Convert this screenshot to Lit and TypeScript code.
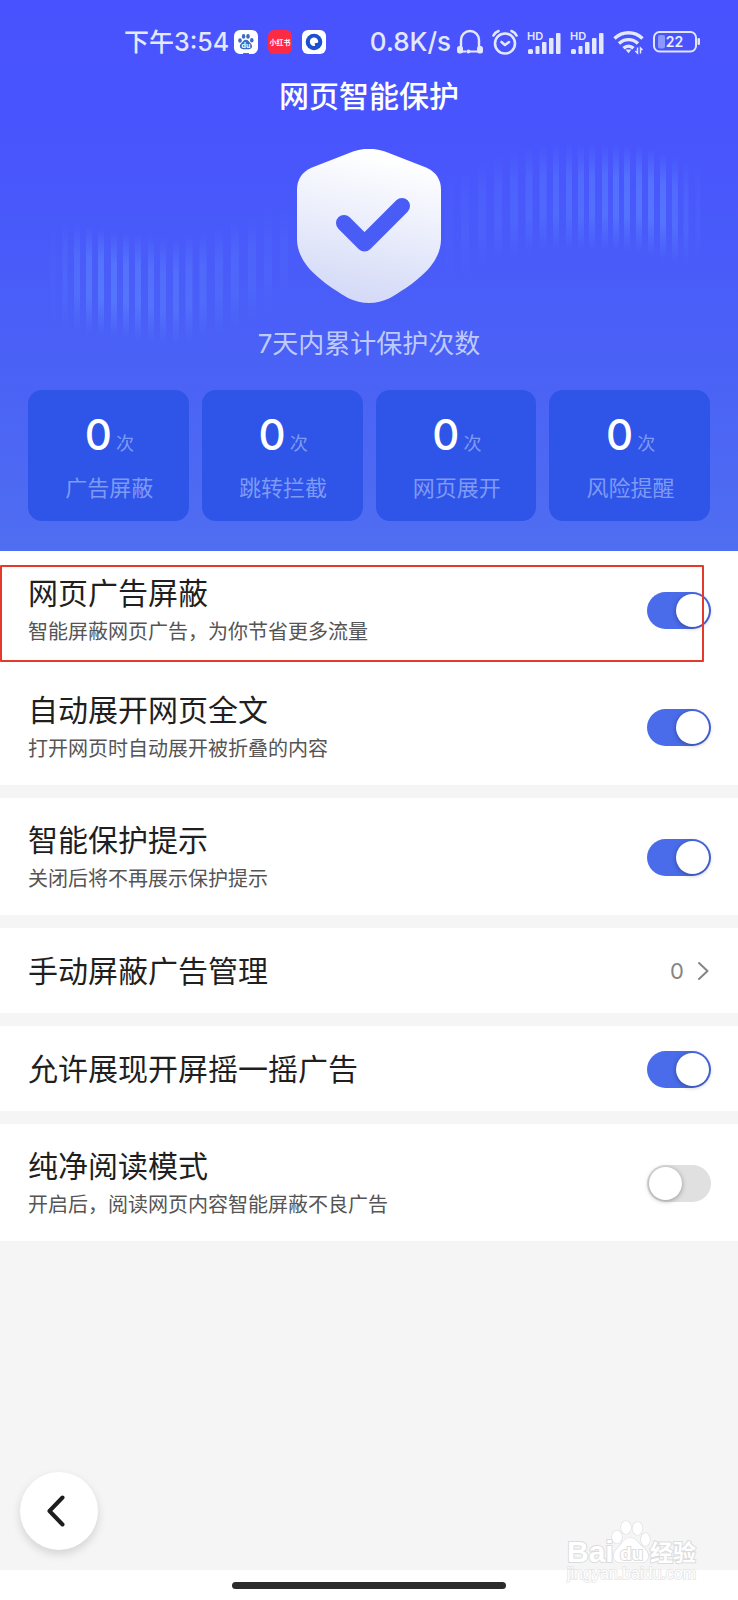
import { LitElement, html, svg, css } from "lit";
import { customElement, property, state } from "lit/decorators.js";

const FONT = css`Inter, "Noto Sans CJK SC", sans-serif`;

type Bar = [x: number, top: number, width: number, alpha: number];

/** Light bars to the left of the shield. */
const LEFT_BARS: Bar[] = [
  [53, 220, 5, 0.1], [65, 222, 5, 0.32], [77, 224, 6, 0.6], [89, 226, 6, 0.85],
  [101, 228, 6, 0.95], [114, 231, 6, 0.85], [126, 232, 6, 0.85], [138, 234, 6, 0.85],
  [151, 236, 6, 0.75], [163, 238, 6, 0.65], [176, 238, 6, 0.65], [189, 236, 7, 0.6],
  [203, 232, 7, 0.5], [219, 228, 8, 0.4], [235, 222, 8, 0.38], [252, 216, 8, 0.3],
  [268, 210, 8, 0.2], [284, 204, 8, 0.14],
];

/** Light bars to the right of the shield. */
const RIGHT_BARS: Bar[] = [
  [449, 176, 8, 0.1], [465, 170, 8, 0.18], [482, 160, 8, 0.25], [498, 154, 8, 0.3],
  [514, 150, 8, 0.36], [529, 147, 7, 0.44], [543, 144, 7, 0.5], [556, 144, 6, 0.56],
  [569, 144, 6, 0.62], [581, 144, 6, 0.66], [592, 144, 6, 0.7], [605, 144, 6, 0.74],
  [616, 144, 6, 0.8], [627, 144, 6, 0.86], [639, 145, 6, 0.88], [651, 148, 6, 0.9],
  [663, 152, 6, 0.85], [675, 156, 6, 0.65], [686, 158, 5, 0.35], [698, 160, 5, 0.15],
];

const bars = (list: Bar[]) =>
  list.map(
    ([x, y, w, a]) =>
      svg`<rect x=${x - w / 2} y=${y} width=${w} height="108" fill="url(#beam)" opacity=${a} />`
  );

const signalIcon = html`
  <svg class="signal" width="34" height="24" viewBox="0 0 34 24" fill="#e4e8ff" aria-hidden="true">
    <text x="0" y="10" font-family="Inter, sans-serif" font-size="11" font-weight="600">HD</text>
    <rect x="1" y="19" width="5" height="5" rx="1.5" />
    <rect x="8.5" y="16" width="4" height="8" rx="1" />
    <rect x="15" y="12" width="4.5" height="12" rx="1" />
    <rect x="22" y="8" width="4.5" height="16" rx="1" />
    <rect x="29" y="3" width="4.5" height="21" rx="1" />
  </svg>
`;

@customElement("status-bar")
export class StatusBar extends LitElement {
  static styles = css`
    :host {
      display: flex;
      align-items: center;
      justify-content: space-between;
      height: 36px;
      padding: 0 38px 0 124px;
      color: #e4e8ff;
      font: 500 26px/36px ${FONT};
    }
    .group {
      display: flex;
      align-items: center;
      white-space: nowrap;
    }
    .apps {
      gap: 10px;
      margin-left: 5px;
    }
    .system {
      gap: 9px;
      margin-left: 6px;
    }
    .time {
      font-size: 25px;
    }
    svg {
      display: block;
      flex: none;
    }
    .signal {
      overflow: visible;
    }
  `;

  render() {
    return html`
      <div class="group">
        <span class="time">下午3:54</span>
        <div class="group apps">
          <svg width="24" height="24" viewBox="0 0 24 24" aria-hidden="true">
            <rect width="24" height="24" rx="6" fill="#fff" />
            <g fill="#3f6ac4">
              <ellipse cx="6" cy="10.5" rx="1.8" ry="2.3" />
              <ellipse cx="9.6" cy="6.4" rx="1.8" ry="2.4" />
              <ellipse cx="14" cy="6.4" rx="1.8" ry="2.4" />
              <ellipse cx="17.8" cy="10.2" rx="1.8" ry="2.3" />
              <path d="M12 9.8c-2.4 0-3 2.1-4.6 3.5-3.2 2.8-.9 6.2 2 5.9h5.2c3.1.3 5-3.2 1.9-5.9C14.9 11.9 14.3 9.8 12 9.8z" />
            </g>
            <text x="12" y="18" fill="#fff" text-anchor="middle" font-family="Inter, sans-serif" font-size="7" font-weight="700">du</text>
            <path d="M9 23.5h6" stroke="#d8405a" stroke-width="1" />
          </svg>
          <svg width="24" height="24" viewBox="0 0 24 24" aria-hidden="true">
            <rect width="24" height="24" rx="6" fill="#fb2a45" />
            <text x="12" y="15" fill="#fff" text-anchor="middle" font-family="Noto Sans CJK SC, sans-serif" font-size="7" font-weight="700">小红书</text>
          </svg>
          <svg width="24" height="24" viewBox="0 0 24 24" aria-hidden="true">
            <rect width="24" height="24" rx="6" fill="#fff" />
            <circle cx="12" cy="12" r="8.3" fill="#1c50cf" />
            <circle cx="12" cy="11.8" r="4.2" fill="#fff" />
            <path d="M12.6 13.2l4.6-.8v5h-3.6z" fill="#1c50cf" />
          </svg>
        </div>
      </div>
      <div class="group">
        <span>0.8K/s</span>
        <div class="group system">
          <svg width="26" height="26" viewBox="0 0 26 26" fill="none" stroke="#e4e8ff" stroke-width="2.4" aria-hidden="true">
            <path d="M4 21V11a9 9 0 0 1 18 0v10" />
            <path d="M4 22.5h5.5M12 22.5h9" stroke-width="2" />
            <g fill="#e4e8ff" stroke="none">
              <rect x="0" y="17" width="6" height="7.5" rx="2.5" />
              <rect x="20" y="17" width="6" height="7.5" rx="2.5" />
              <circle cx="11.5" cy="22.5" r="2" />
            </g>
          </svg>
          <svg width="26" height="26" viewBox="0 0 26 26" fill="none" stroke="#e4e8ff" stroke-width="2.6" stroke-linecap="round" stroke-linejoin="round" aria-hidden="true">
            <circle cx="13" cy="14.5" r="10" />
            <path d="M1.5 6.5C2.5 4.5 4.5 2.8 6.5 2M24.5 6.5C23.5 4.5 21.5 2.8 19.5 2M9.5 13l3.5 3 4-3" />
          </svg>
          ${signalIcon}${signalIcon}
          <svg width="31" height="26" viewBox="0 0 31 26" fill="none" stroke="#e4e8ff" stroke-width="3.4" aria-hidden="true">
            <path d="M1.5 9.5c8-7.6 20-7.6 28 0" />
            <path d="M6 14.5c5.5-5.2 13.5-5.2 19 0" />
            <path d="M10.5 19.3c3-2.8 7-2.8 10 0" />
            <path d="M12.5 20.5h6l-3 3.8z" fill="#e4e8ff" stroke="none" />
            <path d="M24.5 18.5v5.5l-2.2-2M27.5 24.5V19l2 2" stroke-width="1.5" />
          </svg>
          <svg width="47" height="22" viewBox="0 0 47 22" aria-hidden="true">
            <rect x="1" y="1" width="42" height="19.5" rx="5.5" fill="none" stroke="#dfe4ff" stroke-width="2" />
            <rect x="5" y="4" width="7" height="13.5" rx="2" fill="#8c98fb" />
            <rect x="44.5" y="7" width="2.5" height="7" rx="1.2" fill="#dfe4ff" />
            <text x="21.5" y="16" fill="#eef0ff" text-anchor="middle" font-family="Inter, sans-serif" font-size="14" font-weight="600">22</text>
          </svg>
        </div>
      </div>
    `;
  }
}

@customElement("stat-card")
export class StatCard extends LitElement {
  static styles = css`
    :host {
      display: flex;
      flex-direction: column;
      align-items: center;
      gap: 14px;
      padding: 21px 0 18px 2px;
      border-radius: 14px;
      background: #2e55e8;
      font-family: ${FONT};
    }
    .value {
      display: flex;
      align-items: baseline;
      gap: 4px;
    }
    .number {
      color: #fff;
      font-size: 42px;
      font-weight: 500;
      line-height: 48px;
    }
    .unit {
      color: #7f9af5;
      font-size: 18px;
      line-height: 20px;
    }
    .label {
      color: #7f9af5;
      font-size: 22px;
      line-height: 30px;
    }
  `;

  @property({ type: Number }) value = 0;
  @property() label = "";

  render() {
    return html`
      <div class="value"><span class="number">${this.value}</span><span class="unit">次</span></div>
      <div class="label">${this.label}</div>
    `;
  }
}

@customElement("setting-row")
export class SettingRow extends LitElement {
  static styles = css`
    :host {
      display: block;
      position: relative;
      background: #fff;
      font-family: ${FONT};
    }
    .row {
      display: flex;
      align-items: center;
      justify-content: space-between;
      gap: 20px;
      min-height: 46px;
      padding: 20px 27px 19px 28px;
      color: inherit;
      text-decoration: none;
    }
    .text {
      display: flex;
      flex-direction: column;
    }
    .title {
      color: #1f1f1f;
      font-size: 30px;
      line-height: 44px;
    }
    .detail {
      color: #555;
      font-size: 20px;
      line-height: 34px;
    }
    .more {
      display: flex;
      align-items: center;
      gap: 13px;
      padding-right: 2px;
      color: #858585;
      font-size: 22px;
    }
    .switch {
      appearance: none;
      display: flex;
      flex: none;
      box-sizing: border-box;
      width: 64px;
      height: 37px;
      margin: 0;
      padding: 2px;
      border-radius: 19px;
      background: #e0e0e0;
      cursor: pointer;
    }
    .switch::before {
      content: "";
      width: 33px;
      height: 33px;
      border-radius: 50%;
      background: #fff;
      box-shadow: 0 1px 5px rgba(0, 0, 0, 0.35);
    }
    .switch:checked {
      justify-content: flex-end;
      background: #4a6cea;
    }
    .marker {
      position: absolute;
      inset: 14px 34px 6px 0;
      border: 2px solid #e5392c;
      border-radius: 1px;
      pointer-events: none;
    }
  `;

  @property() heading = "";
  @property() detail = "";
  @property() count = "";
  @property({ type: Boolean }) on = false;
  @property({ type: Boolean }) marked = false;

  private toggle(e: Event) {
    this.on = (e.target as HTMLInputElement).checked;
  }

  render() {
    const text = html`
      <span class="text">
        <span class="title">${this.heading}</span>
        ${this.detail ? html`<span class="detail">${this.detail}</span>` : ""}
      </span>
    `;
    if (this.count) {
      return html`
        <a class="row" href="#blocked">
          ${text}
          <span class="more">
            ${this.count}
            <svg width="12" height="20" viewBox="0 0 12 20" fill="none" stroke="#858585" stroke-width="2" stroke-linecap="round" stroke-linejoin="round" aria-hidden="true">
              <path d="M2 2l8.5 8L2 18" />
            </svg>
          </span>
        </a>
      `;
    }
    return html`
      <label class="row">
        ${text}
        <input class="switch" type="checkbox" role="switch" .checked=${this.on} @change=${this.toggle} />
      </label>
      ${this.marked ? html`<div class="marker"></div>` : ""}
    `;
  }
}

interface Setting {
  heading: string;
  detail?: string;
  on?: boolean;
  count?: string;
  marked?: boolean;
}

@customElement("app-root")
export class AppRoot extends LitElement {
  static styles = css`
    :host {
      display: flex;
      flex-direction: column;
      position: relative;
      min-height: 100vh;
      background: #f5f5f5;
      font-family: ${FONT};
    }
    .hero {
      position: relative;
      padding: 24px 0 30px;
      background: linear-gradient(#4853ff, #4855fd 26%, #4a61f6 65%, #4f6ef1);
    }
    .beams {
      position: absolute;
      inset: 0;
      width: 100%;
      height: 100%;
    }
    .content {
      position: relative;
      display: flex;
      flex-direction: column;
    }
    h1 {
      margin: 16px 0 0;
      color: #fff;
      font-size: 30px;
      font-weight: 500;
      line-height: 40px;
      text-align: center;
    }
    .shield {
      display: block;
      align-self: center;
      margin-top: 33px;
    }
    .caption {
      margin: 22px 0 28px;
      color: #bfcafc;
      font-size: 26px;
      font-weight: 400;
      line-height: 36px;
      text-align: center;
    }
    .stats {
      display: grid;
      grid-template-columns: repeat(4, 1fr);
      gap: 13px;
      padding: 0 28px;
    }
    .groups {
      display: flex;
      flex-direction: column;
      gap: 13px;
      flex: 1;
    }
    .footer {
      display: flex;
      justify-content: space-between;
      padding: 0 20px 20px;
    }
    .back {
      display: grid;
      place-items: center;
      width: 78px;
      height: 78px;
      padding: 0 6px 0 0;
      border: 0;
      border-radius: 50%;
      background: #fff;
      box-shadow: 0 4px 10px rgba(0, 0, 0, 0.14);
      cursor: pointer;
    }
    .navigation {
      display: flex;
      justify-content: center;
      padding: 12px 0 11px;
      background: #fff;
    }
    .handle {
      width: 37%;
      height: 7px;
      border-radius: 4px;
      background: #2b2b2b;
    }
    .watermark {
      position: absolute;
      right: 36px;
      bottom: 12px;
    }
  `;

  @state() private stats = ["广告屏蔽", "跳转拦截", "网页展开", "风险提醒"];

  @state() private groups: Setting[][] = [
    [
      { heading: "网页广告屏蔽", detail: "智能屏蔽网页广告，为你节省更多流量", on: true, marked: true },
      { heading: "自动展开网页全文", detail: "打开网页时自动展开被折叠的内容", on: true },
    ],
    [{ heading: "智能保护提示", detail: "关闭后将不再展示保护提示", on: true }],
    [{ heading: "手动屏蔽广告管理", count: "0" }],
    [{ heading: "允许展现开屏摇一摇广告", on: true }],
    [{ heading: "纯净阅读模式", detail: "开启后，阅读网页内容智能屏蔽不良广告" }],
  ];

  render() {
    return html`
      <header class="hero">
        <svg class="beams" viewBox="0 0 738 551" preserveAspectRatio="xMidYMid slice" aria-hidden="true">
          <defs>
            <linearGradient id="beam" x1="0" y1="0" x2="0" y2="1">
              <stop offset="0" stop-color="#587cff" stop-opacity="0" />
              <stop offset="0.3" stop-color="#587cff" stop-opacity="0.8" />
              <stop offset="0.65" stop-color="#587cff" stop-opacity="0.9" />
              <stop offset="1" stop-color="#587cff" stop-opacity="0" />
            </linearGradient>
          </defs>
          ${bars(LEFT_BARS)}${bars(RIGHT_BARS)}
        </svg>
        <div class="content">
          <status-bar></status-bar>
          <h1>网页智能保护</h1>
          <svg class="shield" width="144" height="155" viewBox="0 0 144 155" role="img" aria-label="已保护">
            <defs>
              <linearGradient id="metal" x1="0.6" y1="0" x2="0.4" y2="1">
                <stop offset="0.05" stop-color="#fff" />
                <stop offset="1" stop-color="#d3d9f7" />
              </linearGradient>
            </defs>
            <path fill="url(#metal)" d="M56 2.5Q72-3 88 2.5L129 18.5Q144 25 144 41V90C144 116 118 134 93 149Q72 159 51 149C26 134 0 116 0 90V41Q0 25 15 18.5Z" />
            <path d="M47 74L67.5 94.5L105 57" fill="none" stroke="#4a5cf6" stroke-width="16" stroke-linecap="round" stroke-linejoin="round" />
          </svg>
          <p class="caption">7天内累计保护次数</p>
          <div class="stats">
            ${this.stats.map((label) => html`<stat-card .value=${0} .label=${label}></stat-card>`)}
          </div>
        </div>
      </header>

      <main class="groups">
        ${this.groups.map(
          (group) => html`
            <section>
              ${group.map(
                (s) => html`
                  <setting-row
                    .heading=${s.heading}
                    .detail=${s.detail ?? ""}
                    .count=${s.count ?? ""}
                    .on=${s.on ?? false}
                    .marked=${s.marked ?? false}
                  ></setting-row>
                `
              )}
            </section>
          `
        )}
      </main>

      <footer class="footer">
        <button class="back" type="button" aria-label="返回">
          <svg width="18" height="32" viewBox="0 0 18 32" fill="none" stroke="#1d1d1d" stroke-width="4" stroke-linecap="round" stroke-linejoin="round" aria-hidden="true">
            <path d="M15.5 2.5L2.5 16l13 13.5" />
          </svg>
        </button>
      </footer>
      <div class="navigation"><div class="handle"></div></div>

      <svg class="watermark" width="136" height="68" viewBox="0 0 136 68" fill="#fff" stroke="#dcdcdc" stroke-width="2" paint-order="stroke" font-family="Liberation Sans, sans-serif" role="img" aria-label="百度经验">
        <text x="1" y="42" font-size="30" font-weight="700">Bai</text>
        <g stroke-width="1.2">
          <ellipse cx="51" cy="17" rx="5" ry="6.5" />
          <ellipse cx="60" cy="7.5" rx="5" ry="6.5" />
          <ellipse cx="71.5" cy="8.5" rx="5" ry="6.5" />
          <ellipse cx="79.5" cy="19.5" rx="4.5" ry="6.5" />
          <path d="M64 18c-6 0-8 6-12 10-8 7-4 15 4 14.5h18c9 .5 11-8 4-14.5C72 24 71 18 64 18z" />
        </g>
        <text x="54" y="40" font-size="19" font-weight="700">du</text>
        <text x="84" y="41" font-size="23" font-weight="700" font-family="Noto Sans CJK SC, sans-serif">经验</text>
        <text x="1" y="59" font-size="16" stroke="#e4e4e4" stroke-width="1.5">jingyan.baidu.com</text>
      </svg>
    `;
  }
}
